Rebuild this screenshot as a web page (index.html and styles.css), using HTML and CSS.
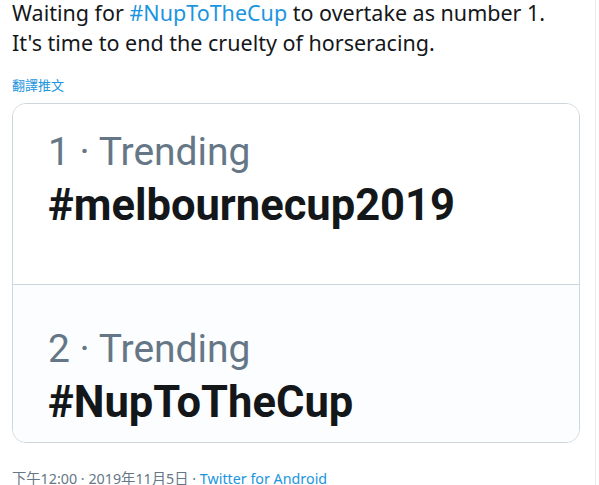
FILE: index.html
```html
<!DOCTYPE html>
<html>
<head>
<meta charset="utf-8">
<link rel="stylesheet" href="styles.css">
</head>
<body>
<div class="tweet">
  <p class="text"><span class="line">Waiting for <span class="tag">#NupToTheCup</span> to overtake as number 1.</span><span class="line">It's time to end the cruelty of horseracing.</span></p>
  <div class="translate">翻譯推文</div>
  <div class="card">
    <div class="trend first">
      <div class="label">1 · Trending</div>
      <div class="name">#melbournecup2019</div>
    </div>
    <div class="trend second">
      <div class="label">2 · Trending</div>
      <div class="name">#NupToTheCup</div>
    </div>
  </div>
  <div class="meta">下午12:00 · 2019年11月5日 · <span class="src">Twitter for Android</span></div>
</div>
</body>
</html>
```
FILE: styles.css
```css
html, body { margin: 0; padding: 0; background: #fff; }
body { width: 599px; height: 485px; overflow: hidden; }
.tweet {
  width: 568px;
  height: 485px;
  padding: 0 15px 0 12px;
  border-right: 1px solid #e6ecf0;
  font-family: "Noto Sans", "Noto Sans CJK TC", sans-serif;
}
.text {
  margin: 0;
  font-size: 21.5px;
  color: #14171a;
  white-space: nowrap;
}
.line {
  display: block;
  height: 30px;
  line-height: 26px;
}
.tag { color: #1b95e0; }
.translate {
  margin-top: 16px;
  font-family: "Noto Sans CJK TC", sans-serif;
  font-size: 13px;
  line-height: 18px;
  color: #1b95e0;
}
.card {
  margin-top: 9px;
  border: 1px solid #ccd6dd;
  border-radius: 14px;
  overflow: hidden;
}
.trend {
  padding-left: 35px;
  font-family: Roboto, sans-serif;
  box-sizing: border-box;
}
.first { height: 180px; padding-top: 25px; background: #fff; }
.second { height: 158px; padding-top: 41px; border-top: 1px solid #ccd6dd; background: #fcfdfe; }
.label {
  font-size: 39px;
  line-height: 46px;
  color: #657786;
  white-space: nowrap;
}
.name {
  font-size: 43.5px;
  font-weight: 700;
  line-height: 62px;
  color: #14171a;
  white-space: nowrap;
}
.meta {
  margin-top: 26px;
  font-size: 14.3px;
  line-height: 20px;
  color: #657786;
  white-space: nowrap;
}
.src { color: #1b95e0; }
```
